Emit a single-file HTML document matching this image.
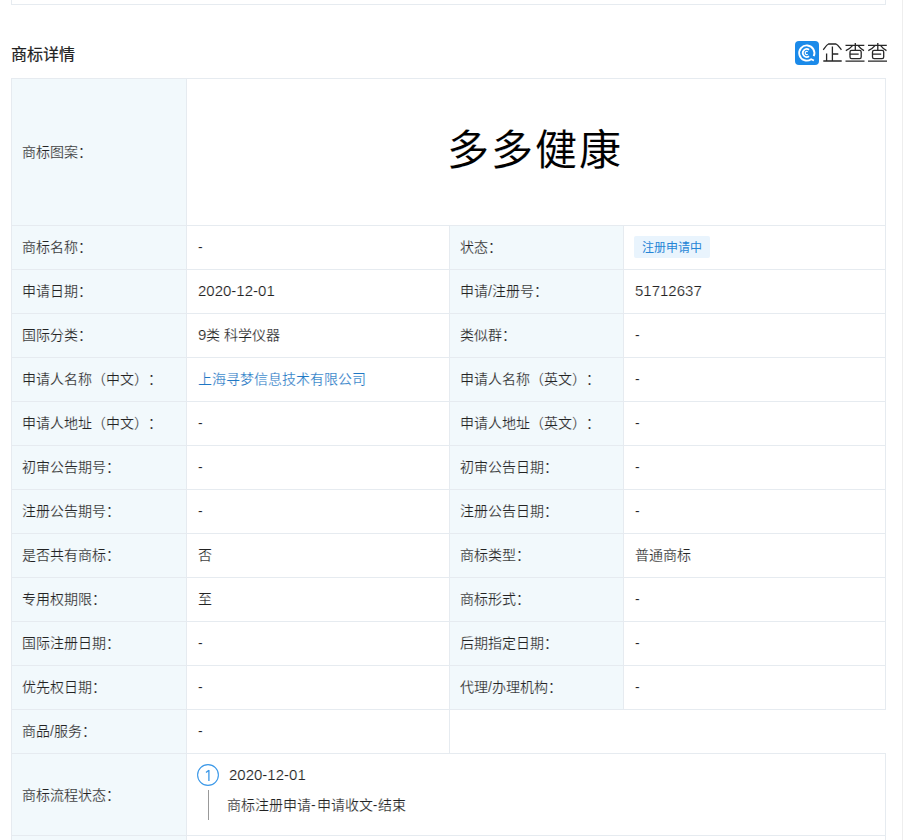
<!DOCTYPE html>
<html lang="zh-CN">
<head>
<meta charset="utf-8">
<style>
html,body{margin:0;padding:0;background:#fff;}
body{width:903px;height:840px;overflow:hidden;position:relative;font-family:"Liberation Sans",sans-serif;color:#333;text-spacing-trim:space-all;}
.n{font-size:15px;}
.abs{position:absolute;}
.topbox{position:absolute;left:11px;top:-20px;width:873px;height:23px;border:1px solid #e6ebf0;}
.edge{position:absolute;left:902px;top:0;width:1px;height:840px;background:#eeeeee;}
.title{position:absolute;left:11px;top:43px;font-size:16px;font-weight:normal;color:#222;line-height:24px;-webkit-text-stroke:0.2px #222;}
.logo{position:absolute;left:795px;top:40px;}
.bg{position:absolute;background:#f2f9fc;}
.hl{position:absolute;height:1px;background:#e6ebf0;}
.vl{position:absolute;width:1px;background:#e6ebf0;}
.t{position:absolute;font-size:14px;line-height:20px;white-space:nowrap;color:#222;-webkit-text-stroke:0.2px #fff;}
.lb{-webkit-text-stroke-color:#f2f9fc;}
.link{color:#1f77c4;}
.tag{position:absolute;left:634px;top:236px;width:76px;height:22px;background:#e9f4fd;border-radius:2px;color:#2585d6;font-size:12px;line-height:25px;text-align:center;}
.big{position:absolute;left:447px;top:123px;font-size:42px;line-height:56px;color:#000;letter-spacing:2px;-webkit-text-stroke:0.1px #fff;}
.circle{position:absolute;left:197px;top:764px;width:20px;height:20px;border:1px solid #128bed;border-radius:50%;color:#128bed;font-size:15px;line-height:21px;text-align:center;}
.tline{position:absolute;left:208px;top:790px;width:1px;height:30px;background:#999;}
</style>
</head>
<body>
<div class="topbox"></div>
<div class="edge"></div>
<div class="title">商标详情</div>
<svg class="logo" width="96" height="28" viewBox="0 0 96 28">
  <rect x="0" y="1" width="24" height="24" rx="4" fill="#1b8ae9"/>
  <g fill="none" stroke="#fff" stroke-linecap="butt" transform="translate(0,1)">
    <path d="M18.69 15.21 A7.6 7.6 0 1 0 16.16 18.23 L18.9 19.5" stroke-width="1.9"/>
    <path d="M14.09 8.72 A4.0 4.0 0 1 0 14.09 15.28" stroke-width="1.7"/>
    <path d="M12.72 10.69 A1.6 1.6 0 1 0 12.72 13.31" stroke-width="1.2"/>
  </g>
  <g fill="none" stroke="#262626" stroke-width="1.3" transform="translate(25,0)">
    <path d="M3.3 9.8 C5 7.5 6.5 4.8 8.5 4 L16 4 C18 4.8 19.5 7.5 21.4 9.8"/>
    <path d="M12.4 6.6 V21 M6.6 13.6 V21 M12.4 14 H18.3 M3.3 21 H21.7"/>
  </g>
  <g fill="none" stroke="#262626" stroke-width="1.3" transform="translate(48,0)">
    <path d="M12.3 3.1 V10.3 M2.5 5.4 H21.3 M9.5 5.6 C7.5 8 5 9.6 2.8 10.6 M15.2 5.6 C17 8 19 9.6 21 10.6"/>
    <rect x="7" y="10.3" width="11.2" height="8.3" rx="1.6"/>
    <path d="M6.8 14.1 H15.7 M2.5 21.1 H21.5"/>
  </g>
  <g fill="none" stroke="#262626" stroke-width="1.3" transform="translate(70.5,0)">
    <path d="M12.3 3.1 V10.3 M2.5 5.4 H21.3 M9.5 5.6 C7.5 8 5 9.6 2.8 10.6 M15.2 5.6 C17 8 19 9.6 21 10.6"/>
    <rect x="7" y="10.3" width="11.2" height="8.3" rx="1.6"/>
    <path d="M6.8 14.1 H15.7 M2.5 21.1 H21.5"/>
  </g>
</svg>

<!-- label backgrounds -->
<div class="bg" style="left:12px;top:79px;width:174px;height:756px;"></div>
<div class="bg" style="left:450px;top:226px;width:173px;height:483px;"></div>

<!-- horizontal lines -->
<div class="hl" style="left:11px;top:78px;width:875px;"></div>
<div class="hl" style="left:11px;top:225px;width:875px;"></div>
<div class="hl" style="left:11px;top:269px;width:875px;"></div>
<div class="hl" style="left:11px;top:313px;width:875px;"></div>
<div class="hl" style="left:11px;top:357px;width:875px;"></div>
<div class="hl" style="left:11px;top:401px;width:875px;"></div>
<div class="hl" style="left:11px;top:445px;width:875px;"></div>
<div class="hl" style="left:11px;top:489px;width:875px;"></div>
<div class="hl" style="left:11px;top:533px;width:875px;"></div>
<div class="hl" style="left:11px;top:577px;width:875px;"></div>
<div class="hl" style="left:11px;top:621px;width:875px;"></div>
<div class="hl" style="left:11px;top:665px;width:875px;"></div>
<div class="hl" style="left:11px;top:709px;width:875px;"></div>
<div class="hl" style="left:11px;top:753px;width:875px;"></div>
<div class="hl" style="left:11px;top:835px;width:875px;"></div>

<!-- vertical lines -->
<div class="vl" style="left:11px;top:78px;height:762px;"></div>
<div class="vl" style="left:186px;top:78px;height:762px;"></div>
<div class="vl" style="left:449px;top:225px;height:528px;"></div>
<div class="vl" style="left:623px;top:225px;height:484px;"></div>
<div class="vl" style="left:885px;top:78px;height:631px;"></div>
<div class="vl" style="left:885px;top:753px;height:87px;"></div>
<div class="bg" style="left:12px;top:836px;width:174px;height:4px;"></div>

<!-- big trademark text -->
<div class="big">多多健康</div>

<!-- rows -->
<div class="t lb" style="left:22px;top:142px;">商标图案：</div>

<div class="t lb" style="left:22px;top:237px;">商标名称：</div>
<div class="t" style="left:198px;top:237px;">-</div>
<div class="t lb" style="left:460px;top:237px;">状态：</div>
<div class="tag">注册申请中</div>

<div class="t lb" style="left:22px;top:281px;">申请日期：</div>
<div class="t" style="left:198px;top:281px;"><span class="n">2020-12-01</span></div>
<div class="t lb" style="left:460px;top:281px;">申请/注册号：</div>
<div class="t" style="left:635px;top:281px;"><span class="n">51712637</span></div>

<div class="t lb" style="left:22px;top:325px;">国际分类：</div>
<div class="t" style="left:198px;top:325px;"><span class="n">9</span>类 科学仪器</div>
<div class="t lb" style="left:460px;top:325px;">类似群：</div>
<div class="t" style="left:635px;top:325px;">-</div>

<div class="t lb" style="left:22px;top:369px;">申请人名称（中文）：</div>
<div class="t link" style="left:198px;top:369px;">上海寻梦信息技术有限公司</div>
<div class="t lb" style="left:460px;top:369px;">申请人名称（英文）：</div>
<div class="t" style="left:635px;top:369px;">-</div>

<div class="t lb" style="left:22px;top:413px;">申请人地址（中文）：</div>
<div class="t" style="left:198px;top:413px;">-</div>
<div class="t lb" style="left:460px;top:413px;">申请人地址（英文）：</div>
<div class="t" style="left:635px;top:413px;">-</div>

<div class="t lb" style="left:22px;top:457px;">初审公告期号：</div>
<div class="t" style="left:198px;top:457px;">-</div>
<div class="t lb" style="left:460px;top:457px;">初审公告日期：</div>
<div class="t" style="left:635px;top:457px;">-</div>

<div class="t lb" style="left:22px;top:501px;">注册公告期号：</div>
<div class="t" style="left:198px;top:501px;">-</div>
<div class="t lb" style="left:460px;top:501px;">注册公告日期：</div>
<div class="t" style="left:635px;top:501px;">-</div>

<div class="t lb" style="left:22px;top:545px;">是否共有商标：</div>
<div class="t" style="left:198px;top:545px;">否</div>
<div class="t lb" style="left:460px;top:545px;">商标类型：</div>
<div class="t" style="left:635px;top:545px;">普通商标</div>

<div class="t lb" style="left:22px;top:589px;">专用权期限：</div>
<div class="t" style="left:198px;top:589px;">至</div>
<div class="t lb" style="left:460px;top:589px;">商标形式：</div>
<div class="t" style="left:635px;top:589px;">-</div>

<div class="t lb" style="left:22px;top:633px;">国际注册日期：</div>
<div class="t" style="left:198px;top:633px;">-</div>
<div class="t lb" style="left:460px;top:633px;">后期指定日期：</div>
<div class="t" style="left:635px;top:633px;">-</div>

<div class="t lb" style="left:22px;top:677px;">优先权日期：</div>
<div class="t" style="left:198px;top:677px;">-</div>
<div class="t lb" style="left:460px;top:677px;">代理/办理机构：</div>
<div class="t" style="left:635px;top:677px;">-</div>

<div class="t lb" style="left:22px;top:721px;">商品/服务：</div>
<div class="t" style="left:198px;top:721px;">-</div>

<div class="t lb" style="left:22px;top:785px;">商标流程状态：</div>
<svg class="abs" style="left:196px;top:763px;" width="24" height="24" viewBox="0 0 24 24"><circle cx="12" cy="12" r="10.4" fill="none" stroke="#3b98e8" stroke-width="1.1"/><path d="M12.9 7 V18 M12.9 7.2 L10 9.6" fill="none" stroke="#3b98e8" stroke-width="1.3"/></svg>
<div class="t" style="left:229px;top:765px;font-size:15px;">2020-12-01</div>
<div class="tline"></div>
<div class="t" style="left:227px;top:795px;font-size:14px;">商标注册申请<span style="letter-spacing:1px">-</span>申请收文<span style="letter-spacing:1px">-</span>结束</div>
</body>
</html>
